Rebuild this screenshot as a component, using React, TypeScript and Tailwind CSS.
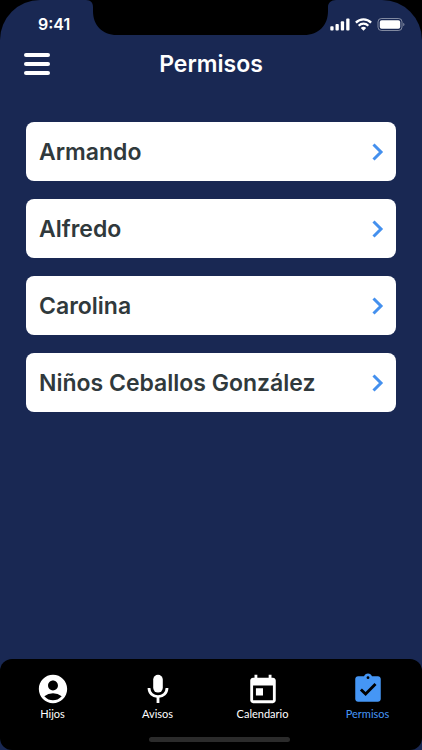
import React from "react";
import { MdAccountCircle } from "react-icons/md";

const children = ["Armando", "Alfredo", "Carolina", "Niños Ceballos González"];

function MicIcon() {
  return (
    <svg viewBox="0 0 34 34" className="size-[34px]" aria-hidden="true">
      <rect x="12.200" y="2.800" width="9.600" height="17.800" rx="4.800" fill="currentColor" />
      <path d="M8 16c0 5 4 8.600 9 8.600s9-3.600 9-8.600M17 24v7" fill="none" stroke="currentColor" strokeWidth="2.800" />
    </svg>
  );
}

function CalendarIcon() {
  return (
    <svg viewBox="0 0 24 24" className="size-[34px]" fill="currentColor" aria-hidden="true">
      <path d="M19 4h-1V2h-2v2H8V2H6v2H5c-1.100 0-2 .9-2 2v14c0 1.100.9 2 2 2h14c1.100 0 2-.9 2-2V6c0-1.100-.9-2-2-2zm0 16H5V9.500h14V20zM7 11.500h5v5H7z" />
    </svg>
  );
}

function PermitIcon() {
  return (
    <svg viewBox="0 0 24 24" className="size-[34px]" aria-hidden="true">
      <path
        fill="currentColor"
        d="M19 3h-4.180C14.400 1.840 13.300 1 12 1s-2.400.840-2.820 2H5c-1.100 0-2 .9-2 2v14c0 1.100.9 2 2 2h14c1.100 0 2-.9 2-2V5c0-1.100-.9-2-2-2z"
      />
      <circle cx="12" cy="4" r="1" fill="black" />
      <path d="M7 12.300l3.300 3.300 7-7.200" fill="none" stroke="black" strokeWidth="2" />
    </svg>
  );
}

const tabs = [
  { label: "Hijos", icon: <MdAccountCircle className="size-[34px]" /> },
  { label: "Avisos", icon: <MicIcon /> },
  { label: "Calendario", icon: <CalendarIcon /> },
  { label: "Permisos", icon: <PermitIcon />, active: true },
];

function StatusBar() {
  return (
    <div className="relative flex h-12 items-center justify-between pr-[17px] pl-[38px]">
      <svg
        viewBox="0 0 250 35"
        className="absolute top-0 left-1/2 h-[35px] w-[250px] -translate-x-1/2"
        aria-hidden="true"
      >
        <path d="M0 0C5 0 7 3 7 7v4c0 14 9 24 24 24h187c15 0 24-10 24-24V7c0-4 3-7 8-7z" fill="black" />
      </svg>
      <span className="text-base leading-6 font-semibold">9:41</span>
      <div className="flex items-center gap-[5px]">
        <svg viewBox="0 0 20 13" className="h-[13px] w-5" fill="white" aria-hidden="true">
          <rect x="0.300" y="8.200" width="3.300" height="4.300" rx="0.900" />
          <rect x="5.500" y="6" width="3.300" height="6.500" rx="0.900" />
          <rect x="10.800" y="3.300" width="3.300" height="9.200" rx="0.900" />
          <rect x="16.200" y="0.500" width="3.300" height="12" rx="0.900" />
        </svg>
        <svg viewBox="0 0 17 13" className="h-[13px] w-[17px]" aria-hidden="true">
          <g fill="none" stroke="white" strokeWidth="2.300">
            <path d="M0.900 4.600a10.700 10.700 0 0 1 15.200 0" />
            <path d="M3.700 7.700a6.800 6.800 0 0 1 9.600 0" />
          </g>
          <path d="M8.500 12.800l-2.700-2.700a3.800 3.800 0 0 1 5.400 0z" fill="white" />
        </svg>
        <svg viewBox="0 0 28 13" className="h-[13px] w-7" aria-hidden="true">
          <rect x="1" y="0.500" width="24" height="12" rx="3.400" fill="none" stroke="white" strokeOpacity="0.450" />
          <rect x="2.800" y="2.300" width="20.400" height="8.400" rx="1.800" fill="white" />
          <path d="M26.300 4.700c1.500.6 1.500 3 0 3.600z" fill="white" fillOpacity="0.500" />
        </svg>
      </div>
    </div>
  );
}

export default function App() {
  return (
    <div className="min-h-screen bg-black">
      <div className="flex min-h-screen flex-col overflow-hidden rounded-t-[40px] bg-[#192853] font-['Inter',sans-serif] text-white">
        <StatusBar />
        <header className="grid grid-cols-[26px_1fr_26px] items-center px-6">
          <button type="button" aria-label="Menú" className="flex flex-col gap-[5px]">
            <span className="h-1 w-full rounded-full bg-white" />
            <span className="h-1 w-full rounded-full bg-white" />
            <span className="h-1 w-full rounded-full bg-white" />
          </button>
          <h1 className="text-center text-[23px] leading-8 font-semibold">Permisos</h1>
        </header>

        <main className="flex-1 px-[26px] pt-[42px]">
          <ul className="flex flex-col gap-[18px]">
            {children.map((name) => (
              <li key={name}>
                <button
                  type="button"
                  className="flex h-[59px] w-full items-center justify-between rounded-lg bg-white pr-3 pl-[13px] text-left text-[23px] leading-8 font-semibold text-[#30393c]"
                >
                  {name}
                  <svg
                    viewBox="0 0 12 18"
                    className="h-[18px] w-3 text-[#4490ee]"
                    fill="none"
                    stroke="currentColor"
                    strokeWidth="3"
                    aria-hidden="true"
                  >
                    <path d="M1.500 1.500L9 9l-7.500 7.500" />
                  </svg>
                </button>
              </li>
            ))}
          </ul>
        </main>

        <nav className="rounded-xl bg-black pt-[13px] pb-2">
          <div className="grid grid-cols-4 pr-0.5">
            {tabs.map((tab) => (
              <button
                key={tab.label}
                type="button"
                aria-current={tab.active ? "page" : undefined}
                className={`flex flex-col items-center font-['Lato',sans-serif] text-[11px] leading-4 ${tab.active ? "text-[#4596f5]" : "text-white"}`}
              >
                {tab.icon}
                {tab.label}
              </button>
            ))}
          </div>
          <div className="mt-[15px] flex justify-center pl-4">
            <div className="h-[5px] w-[141px] rounded-full bg-[#2b2b2b]" />
          </div>
        </nav>
      </div>
    </div>
  );
}
